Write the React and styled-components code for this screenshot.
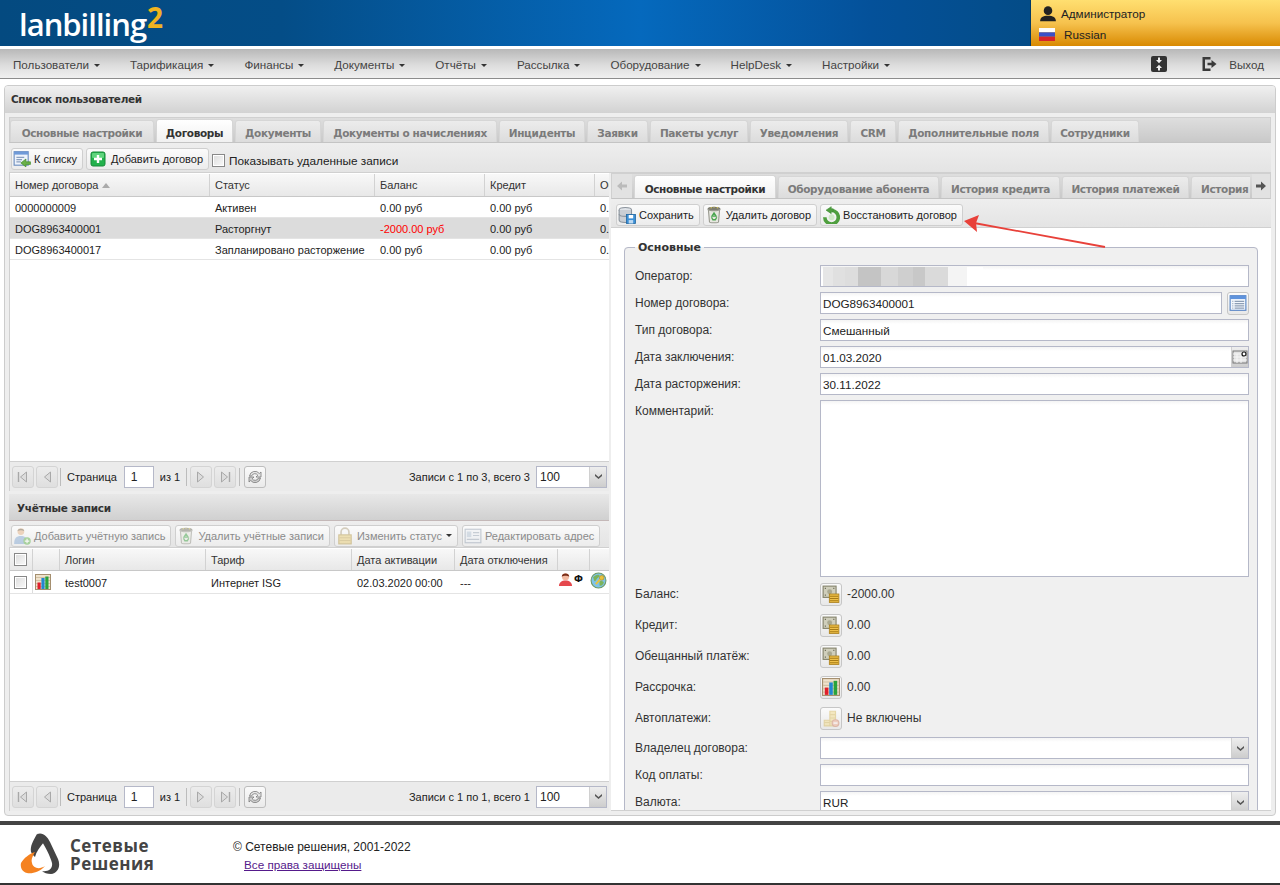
import React from "react";
import styled, { createGlobalStyle } from "styled-components";

const GlobalStyle = createGlobalStyle`
  html, body { margin: 0; padding: 0; background: #fff; }
  body { font: 11.7px "Liberation Sans", Arial, sans-serif; color: #222; }
  * { box-sizing: border-box; }
`;

const BOLD = `"DejaVu Sans", "Liberation Sans", sans-serif`;

/* ---------- icons ---------- */
const Svg = ({ size = 16, children }) => (
  <svg width={size} height={size} viewBox="0 0 16 16" fill="none">{children}</svg>
);

const ListBackIcon = () => (
  <Svg size={18}>
    <rect x="1" y="1.5" width="12.5" height="12" fill="#eef3fb" stroke="#6d8fc0" />
    <rect x="1" y="1.5" width="12.5" height="2.6" fill="#6f9ad8" />
    <path d="M3 6.5h7M3 8.5h5M3 10.5h4" stroke="#8aa0c0" />
    <path d="M15.5 10.5h-4V8L7 11.5 11.5 15v-2.2h4z" fill="#6ab04a" stroke="#3f8a2a" strokeWidth=".6" />
  </Svg>
);
const PlusIcon = () => (
  <svg width="20" height="18" viewBox="-2 -1 20 18" fill="none">
    <rect x="1" y="1" width="14" height="14" rx="2" fill="#22b14c" stroke="#168a38" />
    <rect x="2" y="2" width="12" height="5" rx="1" fill="#5fd47d" />
    <path d="M8 4v8M4 8h8" stroke="#fff" strokeWidth="2.4" />
  </svg>
);
const SaveIcon = () => (
  <Svg size={18}>
    <ellipse cx="6.5" cy="3.5" rx="5.5" ry="2.2" fill="#dfe3e8" stroke="#8d959e" />
    <path d="M1 3.5v9c0 1.2 2.5 2.2 5.5 2.2s5.5-1 5.5-2.2v-9" fill="#c9ced4" stroke="#8d959e" />
    <path d="M1 7c0 1.2 2.5 2.2 5.5 2.2S12 8.2 12 7" stroke="#8d959e" />
    <rect x="7.5" y="7.5" width="8" height="8" fill="#3b8fd6" stroke="#1e659f" strokeWidth=".7" />
    <rect x="9.5" y="8" width="4" height="3" fill="#fff" />
    <rect x="9.5" y="12.5" width="4" height="3" fill="#bcd9f2" />
  </Svg>
);
const BinIcon = () => (
  <Svg size={18}>
    <ellipse cx="8" cy="2.8" rx="5.2" ry="1.6" fill="#7e7e70" stroke="#77776a" />
    <path d="M5 2l1-1M8 1.6V.6M10.5 2l1-1" stroke="#cdbf5a" />
    <path d="M3 3.2l1 11c.1.9 8 .9 8 0l1-11c-1.5 1.4-8.5 1.4-10 0z" fill="#e7e7e0" stroke="#999a90" />
    <path d="M8 6.2l1.8 2.8H6.2zM5.8 10l1.2 2.2h2.2l1.2-2.2" stroke="#4ba651" strokeWidth="1.2" />
  </Svg>
);
const RestoreIcon = () => (
  <Svg size={18}>
    <path d="M8.5 4a6 6 0 1 1-6 6" stroke="#4f9f3f" strokeWidth="3.2" />
    <circle cx="8.5" cy="10" r="2.6" fill="#cfe8c6" />
    <path d="M8.2.6L3.6 3.7l4.6 3.1V4.9H10V2.5H8.2z" fill="#4f9f3f" stroke="#3d8a32" strokeWidth=".5" />
  </Svg>
);
const CoinsIcon = () => (
  <Svg size={18}>
    <rect x="1" y="1" width="11.5" height="10" fill="#cfcebb" stroke="#85836c" />
    <circle cx="6.8" cy="6" r="2.2" fill="#a9a890" />
    <path d="M2.5 3h1M10 3h1M2.5 9h1M10 9h1" stroke="#6d6b58" />
    <rect x="6.5" y="8" width="8.5" height="7.5" fill="#efc04a" stroke="#a87c16" strokeWidth=".7" />
    <path d="M7 10h7.5M7 12h7.5M7 14h7.5" stroke="#a87c16" strokeWidth=".9" />
  </Svg>
);
const ChartIcon = ({ size = 18 }) => (
  <Svg size={size}>
    <rect x=".5" y=".5" width="15" height="15" fill="#efe2cc" stroke="#a58f6f" />
    <path d="M1 3.5h14M1 6.5h14M1 9.5h14M1 12.5h14" stroke="#d3c1a3" />
    <rect x="2.5" y="8.5" width="3.2" height="6.5" fill="#e01f2b" />
    <rect x="6.4" y="4" width="3.2" height="11" fill="#2387d0" />
    <rect x="10.3" y="2.5" width="3.2" height="12.5" fill="#2aa33c" />
  </Svg>
);
const AutoPayIcon = () => (
  <Svg size={18}>
    <path d="M2 10h5v5H2zM7 2h5v13H7z" fill="#f2dc94" stroke="#d8bd68" />
    <path d="M2 12h5M7 5h5M7 8h5M7 11h5" stroke="#d8bd68" />
    <circle cx="12" cy="12.5" r="3" fill="#eeb39a" stroke="#cf8a70" />
    <path d="M10.2 12.5h3.6" stroke="#fff" strokeWidth="1.2" />
  </Svg>
);
const AddUserIcon = () => (
  <Svg size={18}>
    <circle cx="7" cy="4" r="3" fill="#e5b78e" />
    <path d="M4 3.5C4.5 1 9.5 1 10 3.5 8 2.8 6 2.8 4 3.5z" fill="#7a6a52" />
    <path d="M1 15c0-5 2-7 6-7s6 2 6 7z" fill="#8fb0d6" />
    <circle cx="12.5" cy="12.5" r="3.3" fill="#6db85a" />
    <path d="M12.5 10.5v4M10.5 12.5h4" stroke="#fff" />
  </Svg>
);
const LockIcon = () => (
  <Svg size={18}>
    <path d="M4.5 7V4.500a3.500 3.500 0 0 1 7 0V7" stroke="#b5a98c" strokeWidth="1.4" />
    <rect x="2.5" y="7" width="11" height="8" fill="#e8cf7f" stroke="#b89f56" />
    <path d="M3 9.5h10M3 12h10" stroke="#c9b064" />
  </Svg>
);
const AddressIcon = () => (
  <Svg size={18}>
    <rect x="1" y="2" width="14" height="12" fill="#eef1f5" stroke="#9aa6b5" />
    <rect x="2.5" y="4" width="4" height="5" fill="#b9c7d6" />
    <path d="M8 5h5.5M8 7.5h5.5M2.5 11h11" stroke="#a0acba" />
  </Svg>
);
const FormIcon = () => (
  <Svg size={18}>
    <rect x="1" y="1.5" width="14" height="13" fill="#f3f7fd" stroke="#5a86c5" />
    <rect x="1" y="1.5" width="14" height="3" fill="#5f93dc" />
    <path d="M3 6.5h.8M5 6.5h8.5M3 8.5h.8M5 8.5h8.5M3 10.5h.8M5 10.5h8.5M3 12.5h.8M5 12.5h8.5" stroke="#8d9eb5" />
  </Svg>
);
const UserRedIcon = () => (
  <Svg size={15}>
    <circle cx="8" cy="5" r="3.8" fill="#f2b9a0" />
    <path d="M4 5C4 .5 12 .5 12 5 10 3.5 6 3.5 4 5z" fill="#7a2d17" />
    <path d="M1 15c0-4 3-6 7-6s7 2 7 6z" fill="#e5484d" />
  </Svg>
);
const GlobeKeyIcon = () => (
  <Svg size={17}>
    <circle cx="8" cy="8" r="7" fill="#7fc3e8" stroke="#6d9a63" />
    <path d="M3 5c2-2 4-3 6-2 0 2-2 2-3 4s-2 3-3-2zM9 9c2-1 4 0 4 1-1 2-2 3-4 3z" fill="#7cb45a" />
    <circle cx="11" cy="5.5" r="2.2" fill="#e9c23b" stroke="#b28f1e" strokeWidth=".6" />
    <path d="M9.5 7l-4 4.5" stroke="#e9c23b" strokeWidth="1.8" />
  </Svg>
);
const SmallUserIcon = () => (
  <Svg size={18}>
    <circle cx="8" cy="5" r="3.8" fill="#222" />
    <path d="M1 14.5c0-3.5 2.5-5 7-5s7 1.5 7 5z" fill="#222" />
  </Svg>
);
const FlagIcon = () => (
  <svg width="16" height="13" viewBox="0 0 16 13">
    <rect width="16" height="4.3" fill="#fdfdfd" />
    <rect y="4.3" width="16" height="4.4" fill="#3a50c8" />
    <rect y="8.7" width="16" height="4.3" fill="#d8232a" />
  </svg>
);
const ExpandIcon = () => (
  <svg width="16" height="16" viewBox="0 0 16 16">
    <rect width="16" height="16" rx="2" fill="#333" />
    <path d="M7 1.5h2V4h2L8 7.2 5 4h2zM8 8.8L11 12H9v2.5H7V12H5z" fill="#f0f0f0" />
  </svg>
);
const ExitIcon = () => (
  <svg width="16" height="16" viewBox="0 0 16 16">
    <path d="M9.5 1H1.5v14h8v-2.500H4V3.500h5.500z" fill="#3a3a3a" />
    <path d="M6.5 6.7h4V4L15.5 8l-5 4V9.3h-4z" fill="#3a3a3a" />
  </svg>
);
const RefreshIcon = () => (
  <Svg size={16}>
    <path d="M2.5 7a5.5 5.5 0 0 1 9.8-2.5L14 3v5h-5l1.8-1.8A3.5 3.5 0 0 0 4.6 7z" fill="#e6e6e6" stroke="#7a7a7a" strokeWidth=".8" />
    <path d="M13.5 9a5.5 5.5 0 0 1-9.8 2.5L2 13V8h5L5.2 9.8a3.5 3.5 0 0 0 6.2-.8z" fill="#cfcfcf" stroke="#7a7a7a" strokeWidth=".8" />
  </Svg>
);
const PageIcon = ({ dir, bar }) => (
  <svg width="12" height="14" viewBox="0 0 12 14">
    <path d={dir === "left" ? "M9.5 2v10L3.5 7z" : "M2.5 2v10l6-5z"} fill="#dcdcdc" stroke="#a8a8a8" />
    {bar && <path d={dir === "left" ? "M1.5 2v10" : "M10.5 2v10"} stroke="#a8a8a8" strokeWidth="1.4" />}
  </svg>
);
const CalendarIcon = () => (
  <svg width="16" height="16" viewBox="0 0 16 16">
    <rect x="1" y="2" width="14" height="12" fill="#e2e2e2" stroke="#777" />
    <path d="M1 5h14M5 5v9M9 5v9M1 8h14M1 11h14" stroke="#f6f6f6" />
    <circle cx="12" cy="5" r="2" fill="#fff" stroke="#111" strokeWidth="1.2" />
  </svg>
);
const Chevron = () => (
  <svg width="9" height="7" viewBox="0 0 9 7"><path d="M1 1l3.5 3L8 1v2L4.5 6 1 3z" fill="#555" /></svg>
);
const ScrollArrow = ({ dir, dark }) => (
  <svg width="12" height="12" viewBox="0 0 12 12">
    <path d={dir === "left" ? "M6 1.5v3h5v3H6v3L1 6z" : "M6 1.5v3H1v3h5v3L11 6z"} fill={dark ? "#555" : "#bbb"} />
  </svg>
);
const FooterLogo = () => (
  <svg width="42" height="42" viewBox="0 0 42 42">
    <path d="M17 1C23-1 27 3 30 9l8 17c3 7 0 14-7 15-4 0-7-1-9-3 6 1 11-2 10-8-1-5-7-18-15-29z" fill="#444" />
    <path d="M17 1c-4 7-7 12-6 18 1 2 2 3 4 5 1-5 5-10 9-15-2-4-5-7-7-8z" fill="#444" />
    <path d="M1 30c3-5 8-9 14-11-3 5-4 8-3 11 1 5 7 7 13 3-5 6-13 8-18 7-5-1-7-6-6-10z" fill="#f58220" />
  </svg>
);

/* ---------- page ---------- */
const Page = styled.div`
  position: relative;
  width: 1280px;
  height: 885px;
  overflow: hidden;
  display: flex;
  flex-direction: column;
  background: #fff;
`;

const Header = styled.header`
  height: 46px;
  flex: none;
  display: flex;
  justify-content: space-between;
  background: linear-gradient(90deg, #044a80 0%, #044d87 22%, #0569bd 50%, #04519a 68%, #044a80 85%, #044a80 100%);
`;

const Logo = styled.div`
  margin: 6px 0 0 19px;
  height: 36px;
  font: 600 31px/36px "Open Sans", sans-serif;
  letter-spacing: -1px;
  color: #fff;
  white-space: nowrap;
  sup {
    font-size: 28px;
    font-weight: 700;
    line-height: 0;
    color: #efb320;
    vertical-align: 8px;
    margin-left: 1px;
  }
`;

const UserBox = styled.div`
  width: 249px;
  padding: 3px 0 0 8px;
  background: linear-gradient(180deg, #ffdf70 0%, #f6c24e 50%, #d98a02 100%);
  box-shadow: -1px 0 0 #033a66;
  display: flex;
  flex-direction: column;
`;

const UserLine = styled.div`
  height: 21px;
  display: flex;
  align-items: center;
  gap: ${(p) => p.$gap}px;
  color: #222;
`;

const Nav = styled.nav`
  margin-top: 3px;
  height: 30px;
  flex: none;
  display: flex;
  align-items: center;
  padding: 1px 16px 0 13px;
  background: linear-gradient(180deg, #b8b8b8 0%, #dcdcdc 55%, #f0f0f0 100%);
  border-bottom: 1px solid #8c8c8c;
`;

const NavItem = styled.span`
  margin-right: 30px;
  font-size: 11.65px;
  color: #444;
  white-space: nowrap;
  &::after {
    content: "";
    display: inline-block;
    margin-left: 5px;
    vertical-align: 2px;
    border: 3px solid transparent;
    border-top-color: #333;
    border-bottom: 0;
  }
`;

const NavRight = styled.div`
  margin-left: auto;
  display: flex;
  align-items: center;
  font-size: 11.6px;
  color: #444;
  svg:first-child { margin-right: 34px; }
  svg:nth-child(2) { margin-right: 12px; }
`;

const Panel = styled.main`
  margin: 6px 4px 0;
  height: 731px;
  flex: none;
  border: 1px solid #ccc;
  border-radius: 4px;
  background: #eee;
  display: flex;
  flex-direction: column;
  overflow: hidden;
`;

const PanelTitle = styled.div`
  height: 27px;
  flex: none;
  padding: 0 6px 2px;
  display: flex;
  align-items: center;
  font: 700 10.5px ${BOLD};
  letter-spacing: -0.35px;
  color: #333;
  background: linear-gradient(180deg, #f0f0f0, #d2d2d2);
`;

const PanelBody = styled.div`
  flex: 1;
  min-height: 0;
  padding: 4px;
  display: flex;
  flex-direction: column;
`;

const TabStrip = styled.div`
  flex: none;
  height: 26px;
  display: flex;
  align-items: flex-end;
  gap: 2px;
  background: linear-gradient(180deg, #dedede, #c9c9c9);
  border: 1px solid #d0d0d0;
  border-bottom: 1px solid #c4c4c4;
  overflow: hidden;
`;

const Tab = styled.div`
  width: ${(p) => p.$w}px;
  flex: none;
  height: ${(p) => (p.$active ? 24 : 22)}px;
  margin-bottom: ${(p) => (p.$active ? -1 : 0)}px;
  padding: 2px 0 0 ${(p) => (p.$clip ? 9 : 0)}px;
  border: 1px solid #d6d6d6;
  border-bottom: 0;
  border-radius: 3px 3px 0 0;
  display: flex;
  align-items: center;
  justify-content: ${(p) => (p.$clip ? "flex-start" : "center")};
  overflow: hidden;
  white-space: nowrap;
  font: 700 10.5px ${BOLD};
  letter-spacing: -0.35px;
  color: ${(p) => (p.$active ? "#333" : "#7b7b7b")};
  background: ${(p) => (p.$active ? "linear-gradient(180deg,#fff,#f0f0f0)" : "linear-gradient(180deg,#ececec,#dcdcdc)")};
`;

const Toolbar = styled.div`
  flex: none;
  height: ${(p) => p.$height}px;
  display: flex;
  align-items: center;
  gap: ${(p) => p.$gap || 3}px;
  padding: 3px 0 0 ${(p) => p.$pad || 2}px;
  background: linear-gradient(180deg, #eeeeee, #e4e4e4);
  border-bottom: 1px solid #d0d0d0;
`;

const ToolButton = styled.button`
  height: 22px;
  padding: 0 5px 0 1px;
  display: flex;
  align-items: center;
  gap: 3px;
  border: 1px solid #cfcfcf;
  border-radius: 3px;
  background: linear-gradient(180deg, #fbfbfb, #ececec);
  font: 11px "Liberation Sans", sans-serif;
  color: ${(p) => (p.$off ? "#8b8b8b" : "#222")};
  white-space: nowrap;
  svg { flex: none; opacity: ${(p) => (p.$off ? 0.55 : 1)}; }
`;

const Caret = styled.span`
  margin-left: 1px;
  border: 3px solid transparent;
  border-top-color: #333;
  border-bottom: 0;
`;

const Check = styled.span`
  display: inline-block;
  flex: none;
  width: 13px;
  height: 13px;
  border: 1px solid #888;
  background: linear-gradient(135deg, #dcdcdc, #fafafa);
  box-shadow: inset 0 0 0 1px #fff;
`;

const CheckLabel = styled.label`
  display: flex;
  align-items: center;
  gap: 4px;
  margin-top: 3px;
  font-size: 11.8px;
`;

const Split = styled.div`
  flex: 1;
  min-height: 0;
  display: flex;
  gap: 2px;
`;

const LeftCol = styled.div`
  width: 600px;
  flex: none;
  display: flex;
  flex-direction: column;
  min-height: 0;
`;

const RightCol = styled.div`
  flex: 1;
  min-width: 0;
  display: flex;
  flex-direction: column;
`;

const GridBox = styled.section`
  flex: ${(p) => p.$grow} 1 0;
  min-height: 0;
  display: flex;
  flex-direction: column;
  border-left: 1px solid #d0d0d0;
  background: #fff;
  overflow: hidden;
`;

const GridRow = styled.div`
  flex: none;
  display: grid;
  grid-template-columns: ${(p) => p.$cols};
  height: ${(p) => p.$h}px;
  background: ${(p) => (p.$selected ? "#dcdcdc" : "#fff")};
  border-bottom: 1px solid #e4e4e4;
`;

const HeadRow = styled(GridRow)`
  background: linear-gradient(180deg, #f8f8f8, #e8e8e8);
  border-bottom: 1px solid #c8c8c8;
  border-top: 1px solid #fff;
`;

const HeadCell = styled.div`
  padding: 0 5px;
  display: flex;
  align-items: center;
  gap: 4px;
  font-size: 11px;
  color: #333;
  white-space: nowrap;
  overflow: hidden;
  border-right: 1px solid #d2d2d2;
`;

const CheckHead = styled(HeadCell)`
  padding: 0 0 0 4px;
`;

const Cell = styled.div`
  padding: 2px 5px 0;
  display: flex;
  align-items: center;
  font-size: 11px;
  color: ${(p) => (p.$red ? "#f00" : "#222")};
  white-space: nowrap;
  overflow: hidden;
`;

const CheckCell = styled.div`
  padding-left: 4px;
  display: flex;
  align-items: center;
  border-right: 1px solid #dcdcdc;
`;

const IconCell = styled.div`
  display: flex;
  align-items: ${(p) => (p.$raised ? "flex-start" : "center")};
  gap: 1px;
  padding: ${(p) => (p.$raised ? 1 : 0)}px 0 0 ${(p) => p.$left}px;
  b { font: 700 9px/15px ${BOLD}; color: #111; }
`;

const SortArrow = styled.span`
  border: 4px solid transparent;
  border-bottom: 5px solid #aaa;
  border-top: 0;
`;

const Pager = styled.div`
  flex: none;
  height: 30px;
  padding: 0 2px 0 2px;
  display: flex;
  align-items: center;
  font-size: 11px;
  background: #ebebeb;
  border-top: 1px solid #d0d0d0;
  border-left: 1px solid #d0d0d0;
`;

const PageBtn = styled.span`
  width: 22px;
  height: 22px;
  margin-right: 2px;
  border: 1px solid #d4d4d4;
  border-radius: 3px;
  background: linear-gradient(180deg, #ececec, #dfdfdf);
  display: flex;
  align-items: center;
  justify-content: center;
`;

const RefreshBtn = styled(PageBtn)`
  border-color: #bdbdbd;
  background: linear-gradient(180deg, #fafafa, #eaeaea);
  margin-right: 0;
`;

const Sep = styled.span`
  width: 1px;
  height: 18px;
  margin: 0 ${(p) => p.$r}px 0 ${(p) => p.$l}px;
  background: #bcbcbc;
`;

const PagerInput = styled.span`
  width: 30px;
  height: 22px;
  margin: 0 6px 0 7px;
  padding-left: 6px;
  border: 1px solid #b5b8c8;
  background: #fff;
  display: flex;
  align-items: center;
  font-size: 12px;
`;

const PagerInfo = styled.span`
  margin-left: auto;
  margin-right: 6px;
`;

const PerPage = styled.span`
  width: 71px;
  height: 22px;
  padding-left: 3px;
  border: 1px solid #b5b8c8;
  background: #fff;
  display: flex;
  align-items: center;
  justify-content: space-between;
  font-size: 12px;
  overflow: hidden;
`;

const Trigger = styled.span`
  width: 17px;
  height: 100%;
  flex: none;
  display: flex;
  align-items: center;
  justify-content: center;
  background: linear-gradient(180deg, #eee, #cdcdcd);
  border-left: 1px solid #d0d0d0;
`;

const SectionTitle = styled.div`
  flex: none;
  height: 27px;
  margin-top: 3px;
  padding: 2px 0 0 8px;
  display: flex;
  align-items: center;
  font: 700 10.5px ${BOLD};
  letter-spacing: -0.25px;
  color: #333;
  background: linear-gradient(180deg, #e8e8e8, #d0d0d0);
  border-bottom: 1px solid #c4b8b8;
`;

const Scroller = styled.div`
  flex: none;
  width: ${(p) => p.$w}px;
  align-self: stretch;
  display: flex;
  align-items: center;
  justify-content: center;
  background: #e2e2e2;
`;

const TabsViewport = styled.div`
  flex: 1;
  min-width: 0;
  height: 100%;
  display: flex;
  align-items: flex-end;
  gap: 2px;
  overflow: hidden;
`;

const Form = styled.div`
  flex: 1;
  min-height: 0;
  overflow: hidden;
  padding: 13px 13px 0 13px;
  background: #fff;
  border-bottom: 1px solid #d0d0d0;
`;

const FieldSet = styled.fieldset`
  margin: 0;
  padding: 11px 8px 40px 10px;
  min-width: 0;
  border: 1px solid #b5b8c8;
  border-radius: 4px;
  background: #f0f0f0;
`;

const Legend = styled.legend`
  padding: 0 3px;
  font: 700 11px ${BOLD};
  color: #333;
`;

const Field = styled.div`
  display: flex;
  align-items: ${(p) => (p.$top ? "flex-start" : "center")};
  height: ${(p) => p.$h || 22}px;
  margin-bottom: ${(p) => (p.$gap === undefined ? 5 : p.$gap)}px;
`;

const FieldLabel = styled.div`
  width: 185px;
  flex: none;
  font-size: 12px;
  color: #333;
  padding-top: ${(p) => (p.$top ? 4 : 0)}px;
`;

const Input = styled.div`
  flex: 1;
  min-width: 0;
  height: 100%;
  padding-left: 2px;
  border: 1px solid #b5b8c8;
  background: linear-gradient(180deg, #f4f4f4 0, #fff 4px);
  display: flex;
  align-items: center;
  justify-content: space-between;
  font-size: 11.7px;
  color: #222;
  overflow: hidden;
`;

const Blurred = styled.span`
  width: 160px;
  height: 19px;
  background: linear-gradient(
    90deg,
    #e6e6e6 0 6%, #e0e0e0 6% 14%, #ddd 14% 22%, #c4c4c4 22% 36%, #d8d8d8 36% 47%,
    #cfcfcf 47% 56%, #c8c8c8 56% 64%, #dadada 64% 78%, #f4f4f4 78% 90%, #fff 90%
  );
`;

const SquareBtn = styled.span`
  width: 22px;
  height: 23px;
  flex: none;
  margin-left: ${(p) => p.$ml || 0}px;
  border: 1px solid #c6c6c6;
  border-radius: 3px;
  background: linear-gradient(180deg, #fbfbfb, #e8e8e8);
  display: flex;
  align-items: center;
  justify-content: center;
  svg { opacity: ${(p) => (p.$off ? 0.55 : 1)}; }
`;

const Value = styled.span`
  margin-left: 5px;
  font-size: 12px;
  color: #333;
`;

const Footer = styled.footer`
  margin-top: 5px;
  flex: 1;
  min-height: 0;
  display: flex;
  align-items: flex-start;
  border-top: 4px solid #444;
  border-bottom: 2px solid #333;
  background: #fff;
`;

const Brand = styled.div`
  margin: 8px 0 0 20px;
  width: 213px;
  flex: none;
  display: flex;
  align-items: flex-start;
  gap: 8px;
  font: 700 17px/18px "Open Sans", sans-serif;
  letter-spacing: 0.5px;
  color: #444;
  div { margin-top: 4px; }
`;

const Copyright = styled.div`
  margin-top: 14px;
  font-size: 12px;
  line-height: 17px;
  color: #222;
  a {
    display: block;
    margin-left: 11px;
    font-size: 11.7px;
    color: #551a8b;
    text-decoration: underline;
  }
`;

const ArrowMark = styled.svg`
  position: absolute;
  left: 960px;
  top: 212px;
  pointer-events: none;
`;

/* ---------- data ---------- */
const mainTabs = [
  ["Основные настройки", 144], ["Договоры", 77, true], ["Документы", 86],
  ["Документы о начислениях", 174], ["Инциденты", 86], ["Заявки", 61],
  ["Пакеты услуг", 98], ["Уведомления", 98], ["CRM", 46],
  ["Дополнительные поля", 151], ["Сотрудники", 88],
];
const sideTabs = [
  ["Основные настройки", 142, true], ["Оборудование абонента", 161],
  ["История кредита", 119], ["История платежей", 127],
];
const navItems = ["Пользователи", "Тарификация", "Финансы", "Документы", "Отчёты", "Рассылка", "Оборудование", "HelpDesk", "Настройки"];

const contractCols = "200px 165px 110px 110px 100px";
const accountCols = "23px 27px 146px 146px 103px 103px 32px 21px";

const contracts = [
  ["0000000009", "Активен", "0.00 руб", "0.00 руб", "0."],
  ["DOG8963400001", "Расторгнут", "-2000.00 руб", "0.00 руб", "0."],
  ["DOG8963400017", "Запланировано расторжение", "0.00 руб", "0.00 руб", "0."],
];

const Paging = ({ info }) => (
  <Pager>
    <PageBtn><PageIcon dir="left" bar /></PageBtn>
    <PageBtn><PageIcon dir="left" /></PageBtn>
    <Sep $l={0} $r={6} />
    Страница
    <PagerInput>1</PagerInput>
    из 1
    <Sep $l={6} $r={3} />
    <PageBtn><PageIcon dir="right" /></PageBtn>
    <PageBtn><PageIcon dir="right" bar /></PageBtn>
    <Sep $l={1} $r={4} />
    <RefreshBtn><RefreshIcon /></RefreshBtn>
    <PagerInfo>{info}</PagerInfo>
    <PerPage>100<Trigger><Chevron /></Trigger></PerPage>
  </Pager>
);

const MoneyField = ({ label, value, icon, off, gap = 9 }) => (
  <Field $gap={gap}>
    <FieldLabel>{label}</FieldLabel>
    <SquareBtn $off={off}>{icon}</SquareBtn>
    <Value>{value}</Value>
  </Field>
);

export default function App() {
  return (
    <Page>
      <GlobalStyle />
      <Header>
        <Logo>lanbilling<sup>2</sup></Logo>
        <UserBox>
          <UserLine $gap={4}><SmallUserIcon />Администратор</UserLine>
          <UserLine $gap={9}><FlagIcon />Russian</UserLine>
        </UserBox>
      </Header>

      <Nav>
        {navItems.map((item) => <NavItem key={item}>{item}</NavItem>)}
        <NavRight><ExpandIcon /><ExitIcon />Выход</NavRight>
      </Nav>

      <Panel>
        <PanelTitle>Список пользователей</PanelTitle>
        <PanelBody>
          <TabStrip>
            {mainTabs.map(([name, w, active]) => <Tab key={name} $w={w} $active={active}>{name}</Tab>)}
          </TabStrip>
          <Toolbar $height={30}>
            <ToolButton><ListBackIcon />К списку</ToolButton>
            <ToolButton><PlusIcon />Добавить договор</ToolButton>
            <CheckLabel><Check />Показывать удаленные записи</CheckLabel>
          </Toolbar>
          <Split>
            <LeftCol>
              <GridBox $grow={288}>
                <HeadRow $cols={contractCols} $h={24}>
                  <HeadCell>Номер договора <SortArrow /></HeadCell>
                  <HeadCell>Статус</HeadCell>
                  <HeadCell>Баланс</HeadCell>
                  <HeadCell>Кредит</HeadCell>
                  <HeadCell>Об</HeadCell>
                </HeadRow>
                {contracts.map((row, i) => (
                  <GridRow key={row[0]} $cols={contractCols} $h={21} $selected={i === 1}>
                    {row.map((value, j) => <Cell key={j} $red={i === 1 && j === 2}>{value}</Cell>)}
                  </GridRow>
                ))}
              </GridBox>
              <Paging info="Записи с 1 по 3, всего 3" />
              <SectionTitle>Учётные записи</SectionTitle>
              <Toolbar $height={27} $gap={4}>
                <ToolButton $off><AddUserIcon />Добавить учётную запись</ToolButton>
                <ToolButton $off><BinIcon />Удалить учётные записи</ToolButton>
                <ToolButton $off><LockIcon />Изменить статус<Caret /></ToolButton>
                <ToolButton $off><AddressIcon />Редактировать адрес</ToolButton>
              </Toolbar>
              <GridBox $grow={233}>
                <HeadRow $cols={accountCols} $h={23}>
                  <CheckHead><Check /></CheckHead>
                  <HeadCell />
                  <HeadCell>Логин</HeadCell>
                  <HeadCell>Тариф</HeadCell>
                  <HeadCell>Дата активации</HeadCell>
                  <HeadCell>Дата отключения</HeadCell>
                  <HeadCell />
                  <HeadCell />
                </HeadRow>
                <GridRow $cols={accountCols} $h={23}>
                  <CheckCell><Check /></CheckCell>
                  <IconCell $left={2}><ChartIcon size={16} /></IconCell>
                  <Cell>test0007</Cell>
                  <Cell>Интернет ISG</Cell>
                  <Cell>02.03.2020 00:00</Cell>
                  <Cell>---</Cell>
                  <IconCell $left={0} $raised><UserRedIcon /><b>Ф</b></IconCell>
                  <IconCell $left={0} $raised><GlobeKeyIcon /></IconCell>
                </GridRow>
              </GridBox>
              <Paging info="Записи с 1 по 1, всего 1" />
            </LeftCol>

            <RightCol>
              <TabStrip>
                <Scroller $w={20}><ScrollArrow dir="left" /></Scroller>
                <TabsViewport>
                  {sideTabs.map(([name, w, active]) => <Tab key={name} $w={w} $active={active}>{name}</Tab>)}
                  <Tab $w={120} $clip>История</Tab>
                </TabsViewport>
                <Scroller $w={18}><ScrollArrow dir="right" dark /></Scroller>
              </TabStrip>
              <Toolbar $height={29} $pad={5}>
                <ToolButton><SaveIcon />Сохранить</ToolButton>
                <ToolButton><BinIcon />Удалить договор</ToolButton>
                <ToolButton><RestoreIcon />Восстановить договор</ToolButton>
              </Toolbar>
              <Form>
                <FieldSet>
                  <Legend>Основные</Legend>
                  <Field><FieldLabel>Оператор:</FieldLabel><Input><Blurred /></Input></Field>
                  <Field>
                    <FieldLabel>Номер договора:</FieldLabel>
                    <Input>DOG8963400001</Input>
                    <SquareBtn $ml={5}><FormIcon /></SquareBtn>
                  </Field>
                  <Field><FieldLabel>Тип договора:</FieldLabel><Input>Смешанный</Input></Field>
                  <Field>
                    <FieldLabel>Дата заключения:</FieldLabel>
                    <Input>01.03.2020<Trigger><CalendarIcon /></Trigger></Input>
                  </Field>
                  <Field><FieldLabel>Дата расторжения:</FieldLabel><Input>30.11.2022</Input></Field>
                  <Field $h={177} $top $gap={6}>
                    <FieldLabel $top>Комментарий:</FieldLabel>
                    <Input />
                  </Field>
                  <MoneyField label="Баланс:" value="-2000.00" icon={<CoinsIcon />} />
                  <MoneyField label="Кредит:" value="0.00" icon={<CoinsIcon />} />
                  <MoneyField label="Обещанный платёж:" value="0.00" icon={<CoinsIcon />} />
                  <MoneyField label="Рассрочка:" value="0.00" icon={<ChartIcon />} />
                  <MoneyField label="Автоплатежи:" value="Не включены" icon={<AutoPayIcon />} off gap={8} />
                  <Field>
                    <FieldLabel>Владелец договора:</FieldLabel>
                    <Input><span /><Trigger><Chevron /></Trigger></Input>
                  </Field>
                  <Field><FieldLabel>Код оплаты:</FieldLabel><Input /></Field>
                  <Field>
                    <FieldLabel>Валюта:</FieldLabel>
                    <Input>RUR<Trigger><Chevron /></Trigger></Input>
                  </Field>
                </FieldSet>
              </Form>
            </RightCol>
          </Split>
        </PanelBody>
      </Panel>

      <Footer>
        <Brand><FooterLogo /><div>Сетевые<br />Решения</div></Brand>
        <Copyright>© Сетевые решения, 2001-2022<a href="#rights">Все права защищены</a></Copyright>
      </Footer>

      <ArrowMark width="150" height="40" viewBox="0 0 150 40">
        <path d="M145 35L14 11" stroke="#e8413a" strokeWidth="1.8" />
        <path d="M4 9l15-6-3 8 1 9z" fill="#e8413a" />
      </ArrowMark>
    </Page>
  );
}
